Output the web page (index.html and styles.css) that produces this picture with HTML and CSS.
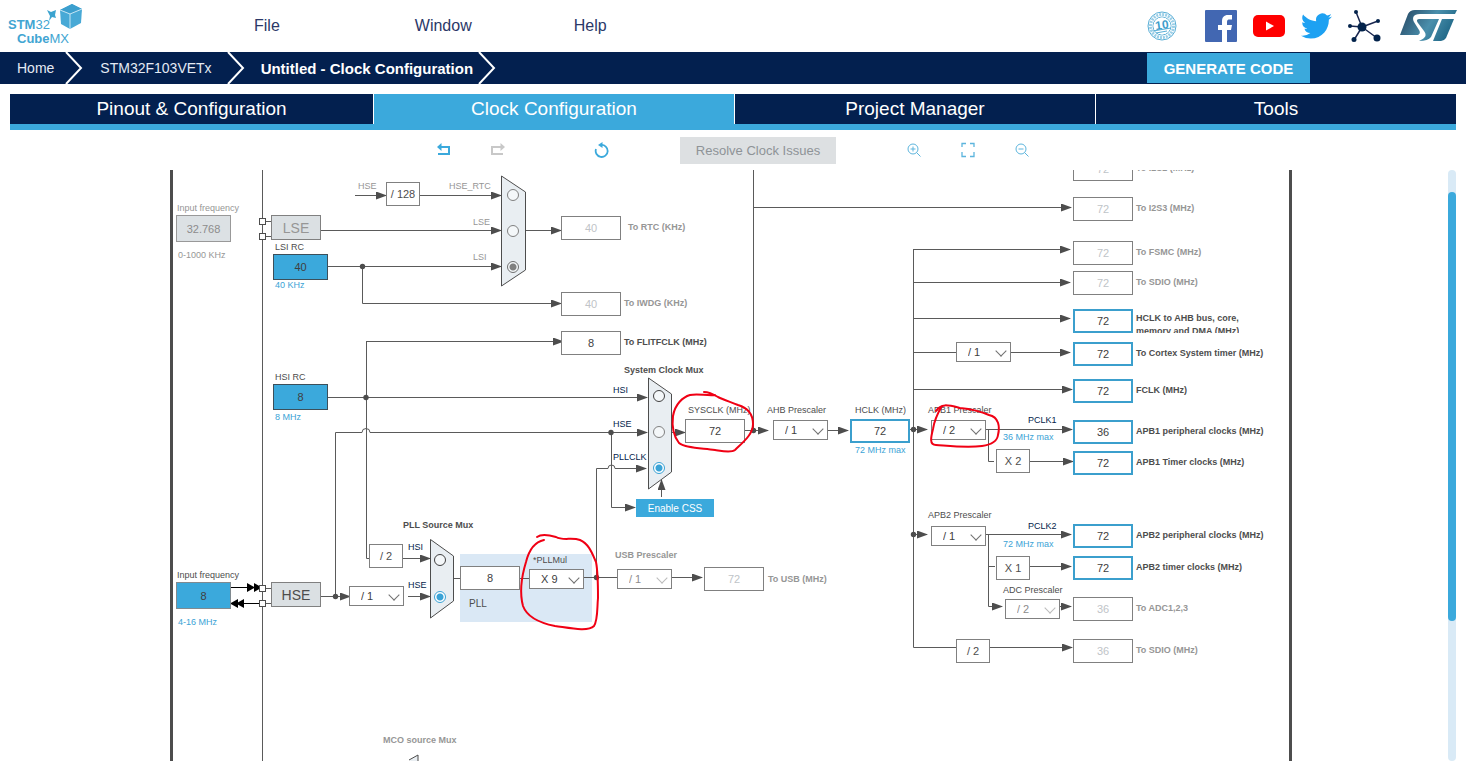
FILE: index.html
```html
<!DOCTYPE html>
<html lang="en">
<head>
<meta charset="utf-8">
<title>STM32CubeMX - Clock Configuration</title>
<link rel="stylesheet" href="styles.css">
</head>
<body>
<header class="topbar">
  <div class="logo">
    <span class="logo-a"><b>STM</b>32</span>
    <span class="logo-b"><b>Cube</b>MX</span>
    <svg class="logo-cube" viewBox="0 0 36 28" aria-hidden="true">
      <path d="M0 6l4 2 5-2-1 5 1 3-4-1-3 4 1-5z" fill="#3ba3cf"/>
      <path d="M13 6L25 0l10 5-1 14-11 6-9-5z" fill="#48a9d6"/>
      <path d="M13 6L25 0l10 5-12 5z" fill="#3c9fce"/>
      <path d="M13 6l10 4 12-5M23 10v15" fill="none" stroke="#c7e6f4"/>
    </svg>
  </div>
  <nav class="menu">
    <button type="button" class="menu-item">File</button>
    <button type="button" class="menu-item">Window</button>
    <button type="button" class="menu-item">Help</button>
  </nav>
  <div class="social">
    <a href="#" class="badge" aria-label="Ten years">
      <svg width="30" height="30" viewBox="0 0 30 30"><g fill="none" stroke="#58aed6"><circle cx="15" cy="15" r="14"/><circle cx="15" cy="15" r="11.5" stroke-width="3" stroke-dasharray="2 1" opacity=".6"/><circle cx="15" cy="15" r="9"/></g><circle cx="15" cy="15" r="8.5" fill="#fff"/><path d="M6 20l18-3M9 22l11-2" stroke="#58aed6"/><text class="badge-num" x="15" y="18" text-anchor="middle" transform="rotate(-8 15 15)">10</text></svg>
    </a>
    <a href="#" aria-label="Facebook">
      <svg width="32" height="32" viewBox="0 0 32 32"><rect width="32" height="32" rx="1" fill="#4267b2"/><path d="M22 32V20h4l1-5h-5v-3c0-2 1-2.500 2.500-2.500H27V5h-4c-4 0-6 2.500-6 6v4h-4v5h4v12z" fill="#fff"/></svg>
    </a>
    <a href="#" aria-label="YouTube">
      <svg width="32" height="32" viewBox="0 0 32 32"><rect y="5" width="32" height="22" rx="5" fill="#f00"/><path d="M13 11.500v9l8-4.500z" fill="#fff"/></svg>
    </a>
    <a href="#" aria-label="Twitter">
      <svg width="31" height="32" viewBox="0 0 24 24"><path fill="#1da1f2" d="M23.950 4.570a10 10 0 01-2.820.770 4.960 4.960 0 002.160-2.720c-.950.550-2 .950-3.130 1.180a4.920 4.920 0 00-8.380 4.480C7.690 8.090 4.070 6.130 1.640 3.160a4.920 4.920 0 001.520 6.570 4.900 4.900 0 01-2.230-.610v.060a4.920 4.920 0 003.950 4.830 5 5 0 01-2.210.080 4.940 4.940 0 004.600 3.420A9.870 9.870 0 010 19.540a14 14 0 007.550 2.210c9.050 0 14-7.500 14-13.980l-.020-.640a9.940 9.940 0 002.420-2.560z"/></svg>
    </a>
    <a href="#" aria-label="Community">
      <svg width="33" height="32" viewBox="0 0 33 32"><path d="M14 17L8 2M14 17l16-6M14 17L2 16M14 17L6 30M14 17l15 11" stroke="#1a2750" stroke-width="1.500"/><g fill="#03234b"><circle cx="14" cy="17" r="4.500"/><circle cx="8" cy="2" r="2"/><circle cx="30" cy="11" r="2"/><circle cx="2" cy="16" r="2"/><circle cx="6" cy="29.500" r="2.500"/><circle cx="29" cy="28" r="3.500"/></g></svg>
    </a>
    <a href="#" class="st" aria-label="ST">
      <svg width="58" height="32" viewBox="0 0 58 32">
        <defs><linearGradient id="st" gradientUnits="userSpaceOnUse" x1="0" y1="0" x2="50" y2="32"><stop offset="0" stop-color="#24435f"/><stop offset=".55" stop-color="#4a8fac"/><stop offset="1" stop-color="#176080"/></linearGradient></defs>
        <path fill="url(#st)" d="M0 25L8 4Q10 0 15 0H57L55 4H20C13 4 12 8 14 12L19 20C21 23 19 25 17 25Z"/>
        <path fill="url(#st)" d="M18 13C16 10 17 9 20 9H39L31 27Q28 31 19 31C26 28 27 25 24 21Z"/>
        <path fill="url(#st)" d="M42 9H54L46 28Q44 31 41 31H33Z"/>
      </svg>
    </a>
  </div>
</header>

<nav class="crumbs" aria-label="Breadcrumb">
  <a href="#" class="crumb crumb-home">Home</a>
  <svg class="sep" viewBox="0 0 18 32" aria-hidden="true"><path d="M1 0l15 16L1 32"/></svg>
  <a href="#" class="crumb crumb-chip">STM32F103VETx</a>
  <svg class="sep" viewBox="0 0 18 32" aria-hidden="true"><path d="M1 0l15 16L1 32"/></svg>
  <a href="#" class="crumb crumb-current">Untitled - Clock Configuration</a>
  <svg class="sep" viewBox="0 0 18 32" aria-hidden="true"><path d="M1 0l15 16L1 32"/></svg>
  <button type="button" class="generate">GENERATE CODE</button>
</nav>

<main class="page">
  <div class="tabs">
    <button type="button" class="tab">Pinout &amp; Configuration</button>
    <button type="button" class="tab tab-active">Clock Configuration</button>
    <button type="button" class="tab">Project Manager</button>
    <button type="button" class="tab">Tools</button>
  </div>

  <div class="toolbar">
    <button type="button" class="tool" aria-label="Undo"><svg viewBox="0 0 16 16"><path d="M3 5h10v7H2" fill="none" stroke="#3ba9dc" stroke-width="2"/><path d="M1 5l4.500-4v8z" fill="#3ba9dc"/></svg></button>
    <button type="button" class="tool tool-redo" disabled aria-label="Redo"><svg viewBox="0 0 16 16"><path d="M12 5H2v7h11" fill="none" stroke="#c8c8c8" stroke-width="2"/><path d="M15 5l-4.500-4v8z" fill="#c8c8c8"/></svg></button>
    <button type="button" class="tool tool-reset" aria-label="Reset"><svg viewBox="0 0 16 16"><path d="M7 3a6 6 0 1 1-5 4" fill="none" stroke="#3ba9dc" stroke-width="1.800"/><path d="M4 3l4.500-3v6z" fill="#3ba9dc"/></svg></button>
    <button type="button" class="resolve" disabled>Resolve Clock Issues</button>
    <button type="button" class="tool tool-in" aria-label="Zoom in"><svg viewBox="0 0 16 16" fill="none" stroke="#5cb5dd"><circle cx="7" cy="7" r="5"/><path d="M10.500 10.500l4 4M4.500 7h5M7 4.500v5"/></svg></button>
    <button type="button" class="tool" aria-label="Fit"><svg viewBox="0 0 16 16" fill="none" stroke="#5cb5dd" stroke-width="1.300"><path d="M2 5V1.500H6M10 1.500h4V5M14 10v4.500H10M6 14.500H2V10"/></svg></button>
    <button type="button" class="tool tool-out" aria-label="Zoom out"><svg viewBox="0 0 16 16" fill="none" stroke="#5cb5dd"><circle cx="7" cy="7" r="5"/><path d="M10.500 10.500l4 4M4.500 7h5"/></svg></button>
  </div>

  <div class="viewport">
    <div class="stage">
      <svg class="wires" viewBox="170 170 1122 591" aria-hidden="true">
        <defs>
          <marker id="arr" markerUnits="userSpaceOnUse" markerWidth="11" markerHeight="8" refX="10" refY="4" orient="auto"><path d="M0 0L11 4L0 8z" fill="#4d4d4d"/></marker>
        </defs>
        <path d="M262.500 170V761" class="w"/>
        <rect x="460" y="554" width="132" height="68" fill="#dae8f5"/>
        <g class="w a">
          <path d="M355 195.500H386"/><path d="M420 195.500H501"/><path d="M321 230.500H501"/><path d="M328 266.500H501"/>
          <path d="M362.500 266V303.500H561"/><path d="M525 230.500H561"/>
          <path d="M366.500 341.500H563"/><path d="M328 397.500H647"/>
          <path d="M335.500 596V432.500H362a4 4 0 0 1 8 0H647"/>
          <path d="M611.500 432V507.500H635"/>
          <path d="M596.500 577V468.500H608a3.500 3.500 0 0 1 7 0H646"/>
          <path d="M661.500 497V480"/><path d="M672 432.500H685"/><path d="M745 430.500H768"/>
          <path d="M753.500 207.500H1071"/><path d="M828 430.500H848"/><path d="M910 429.500H927"/>
          <path d="M913.500 249.500H1070"/><path d="M913.500 282.500H1070"/><path d="M913.500 318.500H1070"/><path d="M1011 352.500H1070"/><path d="M913.500 389.500H1072"/>
          <path d="M986 429.500H1072"/><path d="M1030 461.500H1073"/>
          <path d="M913.500 534.500H927"/><path d="M986 534.500H1071"/><path d="M1030 566.500H1071"/><path d="M988.500 534V606.500H1002"/><path d="M1060 606.500H1071"/>
          <path d="M990 647.500H1072"/>
          <path d="M403 558.500H430"/><path d="M321 596.500H350"/><path d="M408 596.500H430"/><path d="M672 577.500H702"/>
        </g>
        <g class="w">
          <path d="M366.500 341V558.500H369M753.500 170V430M913.500 249V647.500H956M913.500 352.500H956M988.500 429V461.500H994M988.500 566.500H995M453 578.500H460M520 578.500H529M584 577.500H617M266 221.500H271M266 236.500H271M266 588.500H271M266 603.500H271"/>
        </g>
        <g fill="#4d4d4d"><circle cx="362.500" cy="266.500" r="2.700"/><circle cx="366" cy="397.500" r="2.700"/><circle cx="611" cy="432.500" r="2.700"/><circle cx="753.500" cy="430.500" r="2.700"/><circle cx="913.500" cy="429.500" r="2.700"/><circle cx="913.500" cy="534.500" r="2.700"/><circle cx="335.500" cy="596.500" r="2.700"/><circle cx="596.500" cy="577.500" r="2.700"/></g>
        <g stroke="#000" fill="#000"><path d="M231 587.500H260M231 603.500H260"/><path stroke="none" d="M247 583l8 4.500-8 4.500zM254 583l8 4.500-8 4.500zM238 599l-8 4.500 8 4.500zM244 599l-8 4.500 8 4.500z"/></g>
        <g fill="#fff" stroke="#4d4d4d"><rect x="259.500" y="218.500" width="6" height="6"/><rect x="259.500" y="233.500" width="6" height="6"/><rect x="259.500" y="585.500" width="6" height="6"/><rect x="259.500" y="600.500" width="6" height="6"/></g>
        <g fill="#e9eef2" stroke="#4d4d4d"><path d="M501.500 176L525.500 192V270L501.500 286z"/><path d="M648.500 378L671.500 394V472L648.500 489z"/><path d="M430.500 539.500L453.500 556V601L430.500 618z"/><path d="M409 760L418 755V764"/></g>
      </svg>

      <!-- External inputs -->
      <label class="tag dim p-lsein" for="lsein">Input frequency</label>
      <input class="src off p-lsein-box" id="lsein" value="32.768" disabled>
      <span class="tag dim p-lsein-range">0-1000 KHz</span>
      <button type="button" class="osc off p-lse">LSE</button>
      <label class="tag p-lsi" for="lsi">LSI RC</label>
      <input class="src rc p-lsi-box" id="lsi" value="40" readonly>
      <span class="tag blue p-lsi-range">40 KHz</span>
      <label class="tag p-hsi" for="hsi">HSI RC</label>
      <input class="src rc p-hsi-box" id="hsi" value="8" readonly>
      <span class="tag blue p-hsi-range">8 MHz</span>
      <label class="tag p-hsein" for="hsein">Input frequency</label>
      <input class="src p-hsein-box" id="hsein" value="8">
      <span class="tag blue p-hsein-range">4-16 MHz</span>
      <button type="button" class="osc p-hse">HSE</button>

      <!-- RTC mux -->
      <span class="tag dim p-hse-128">HSE</span>
      <div class="fixed p-div128">/ 128</div>
      <label class="tag dim p-hsertc" for="r1">HSE_RTC</label><input type="radio" class="radio dimr p-r1" name="rtc" id="r1" disabled>
      <label class="tag dim p-rlse" for="r2">LSE</label><input type="radio" class="radio dimr p-r2" name="rtc" id="r2" disabled>
      <label class="tag dim p-rlsi" for="r3">LSI</label><input type="radio" class="radio dimr p-r3" name="rtc" id="r3" disabled checked>
      <div class="out off far p-rtc"><input id="rtc" value="40" disabled><label for="rtc">To RTC (KHz)</label></div>
      <div class="out off p-iwdg"><input id="iwdg" value="40" disabled><label for="iwdg">To IWDG (KHz)</label></div>
      <div class="out p-flitf"><input id="flitf" value="8"><label for="flitf">To FLITFCLK (MHz)</label></div>

      <!-- PLL -->
      <span class="tag strong p-pllmux">PLL Source Mux</span>
      <div class="fixed p-plldiv2">/ 2</div>
      <label class="tag navy p-phsi" for="p1">HSI</label><input type="radio" class="radio p-p1" name="pll" id="p1">
      <label class="tag navy p-phse" for="p2">HSE</label><input type="radio" class="radio p-p2" name="pll" id="p2" checked>
      <span class="pick p-hsediv"><select aria-label="HSE divider"><option>/ 1</option></select></span>
      <div class="out p-pllin"><input id="pllin" value="8"></div>
      <label class="tag big p-pll" for="pllin">PLL</label>
      <label class="tag p-pllmul" for="pllmul">*PLLMul</label>
      <span class="pick p-pllmul-box"><select id="pllmul"><option>X 9</option></select></span>
      <label class="tag strong dim p-usbpre" for="usbpre">USB Prescaler</label>
      <span class="pick off p-usbpre-box"><select id="usbpre" disabled><option>/ 1</option></select></span>
      <div class="out off near p-usb"><input id="usb" value="72" disabled><label for="usb">To USB (MHz)</label></div>

      <!-- System clock -->
      <span class="tag strong p-sysmux">System Clock Mux</span>
      <label class="tag navy p-shsi" for="s1">HSI</label><input type="radio" class="radio p-s1" name="sys" id="s1">
      <label class="tag navy p-shse" for="s2">HSE</label><input type="radio" class="radio dimr p-s2" name="sys" id="s2">
      <label class="tag navy p-spll" for="s3">PLLCLK</label><input type="radio" class="radio p-s3" name="sys" id="s3" checked>
      <button type="button" class="css-btn p-css">Enable CSS</button>
      <label class="tag p-sysclk" for="sysclk">SYSCLK (MHz)</label>
      <div class="out p-sysclk-box"><input id="sysclk" value="72"></div>
      <label class="tag p-ahb" for="ahb">AHB Prescaler</label>
      <span class="pick p-ahb-box"><select id="ahb"><option>/ 1</option></select></span>
      <label class="tag p-hclk" for="hclk">HCLK (MHz)</label>
      <div class="out hot p-hclk-box"><input id="hclk" value="72"></div>
      <span class="tag blue p-hclk-max">72 MHz max</span>

      <!-- Peripheral buses -->
      <span class="pick p-cortexdiv"><select aria-label="Cortex prescaler"><option>/ 1</option></select></span>
      <label class="tag p-apb1" for="apb1">APB1 Prescaler</label>
      <span class="pick p-apb1-box"><select id="apb1"><option>/ 2</option></select></span>
      <span class="tag navy p-pclk1">PCLK1</span><span class="tag blue p-pclk1-max">36 MHz max</span>
      <div class="fixed p-x2">X 2</div>
      <label class="tag p-apb2" for="apb2">APB2 Prescaler</label>
      <span class="pick p-apb2-box"><select id="apb2"><option>/ 1</option></select></span>
      <span class="tag navy p-pclk2">PCLK2</span><span class="tag blue p-pclk2-max">72 MHz max</span>
      <div class="fixed p-x1">X 1</div>
      <label class="tag p-adc" for="adc">ADC Prescaler</label>
      <span class="pick off p-adc-box"><select id="adc" disabled><option>/ 2</option></select></span>
      <div class="fixed p-sdiodiv">/ 2</div>

      <div class="out off end e-i2s2"><input id="i2s2" value="72" disabled><label for="i2s2">To I2S2 (MHz)</label></div>
      <div class="out off end e-i2s3"><input id="i2s3" value="72" disabled><label for="i2s3">To I2S3 (MHz)</label></div>
      <div class="out off end e-fsmc"><input id="fsmc" value="72" disabled><label for="fsmc">To FSMC (MHz)</label></div>
      <div class="out off end e-sdio"><input id="sdio" value="72" disabled><label for="sdio">To SDIO (MHz)</label></div>
      <div class="out hot end tall e-core"><input id="core" value="72"><label for="core">HCLK to AHB bus, core,<br>memory and DMA (MHz)</label></div>
      <div class="out hot end e-cortex"><input id="cortex" value="72"><label for="cortex">To Cortex System timer (MHz)</label></div>
      <div class="out hot end e-fclk"><input id="fclk" value="72"><label for="fclk">FCLK (MHz)</label></div>
      <div class="out hot end e-apb1p"><input id="apb1p" value="36"><label for="apb1p">APB1 peripheral clocks (MHz)</label></div>
      <div class="out hot end e-apb1t"><input id="apb1t" value="72"><label for="apb1t">APB1 Timer clocks (MHz)</label></div>
      <div class="out hot end e-apb2p"><input id="apb2p" value="72"><label for="apb2p">APB2 peripheral clocks (MHz)</label></div>
      <div class="out hot end e-apb2t"><input id="apb2t" value="72"><label for="apb2t">APB2 timer clocks (MHz)</label></div>
      <div class="out off end e-adc"><input id="adcout" value="36" disabled><label for="adcout">To ADC1,2,3</label></div>
      <div class="out off end e-sdio2"><input id="sdio2" value="36" disabled><label for="sdio2">To SDIO (MHz)</label></div>

      <span class="tag strong dim p-mco">MCO source Mux</span>

      <svg class="wires ink" viewBox="170 170 1122 591" aria-hidden="true">
        <path d="M704 392C708 392 713 394 718 397C724 400 731 402 738 405C748 408 753 415 753 424C753 435 742 443 735 450C731 453 722 451 715 450C700 448 685 448 679 443C672 434 672 424 673 416C675 404 683 397 690 395C698 393 706 396 715 395"/>
        <path d="M936 411C941 403 948 405 960 408C970 409 980 411 989 415C999 417 1000 427 998 435C997 443 989 445 982 446C967 448 950 446 936 445C929 445 931 437 933 429C934 422 936 416 942 406"/>
        <path d="M537 537C541 534 549 535 556 537C563 541 572 537 580 540C589 544 592 553 596 562C598 572 598 585 598 598C597 608 598 620 594 626C588 632 570 628 555 626C540 623 527 617 523 606C519 591 522 575 526 562C529 550 534 542 544 540"/>
      </svg>
    </div>
    <div class="track"><div class="thumb"></div></div>
  </div>
</main>
</body>
</html>
```

FILE: styles.css
```css
* { box-sizing: border-box; }
body {
  margin: 0;
  min-height: 100vh;
  display: flex;
  flex-direction: column;
  background: #fff;
  font-family: "Liberation Sans", Arial, sans-serif;
  color: #4d4d4d;
}
button, input, select { font-family: inherit; margin: 0; }
button { border: 0; padding: 0; background: none; cursor: pointer; }
a { text-decoration: none; color: inherit; }
svg { display: block; }

/* Top bar */
.topbar { display: flex; align-items: center; height: 52px; padding: 0 8px; }
.logo { position: relative; width: 76px; height: 44px; color: #41a5d2; font-size: 13px; line-height: 14px; padding-top: 14px; }
.logo span { display: block; }
.logo-b { padding-left: 9px; }
.logo-cube { position: absolute; right: 1px; top: 0; width: 36px; height: 28px; }
.menu { display: flex; padding-left: 170px; }
.menu-item { font-size: 16px; line-height: 24px; color: #2b3868; }
.menu-item + .menu-item { margin-left: 135px; }
.menu-item:last-child { margin-left: 102px; }
.social { display: flex; align-items: center; gap: 16px; margin-left: auto; }
.badge { margin-right: 12px; }
.badge-num { font-size: 12px; font-weight: bold; fill: #3d9dcb; }
.st { margin-left: 3px; }

/* Breadcrumb */
.crumbs { display: flex; align-items: center; height: 32px; background: #03204f; color: #fff; font-size: 14px; padding-left: 17px; }
.crumb { color: #e4eaf4; }
.crumb-home { margin-right: 11px; }
.crumb-chip { margin: 0 15px 0 17px; }
.crumb-current { margin: 0 5px 0 16px; font-size: 15px; font-weight: bold; color: #fff; }
.sep { width: 18px; height: 32px; fill: none; stroke: #fff; stroke-width: 2; }
.generate { margin-left: auto; margin-right: 156px; width: 163px; height: 30px; background: #3ba9dc; color: #fff; font-size: 15px; font-weight: bold; }

/* Tabs */
.page { flex: 1; display: flex; flex-direction: column; padding: 10px; }
.tabs { display: grid; grid-template-columns: 363fr 360fr 360fr 360fr; gap: 1px; border-bottom: 6px solid #3ba9dc; }
.tab { height: 30px; background: #03204f; color: #fff; font-size: 19px; }
.tab-active { background: #3ba9dc; }

/* Toolbar */
.toolbar { display: flex; align-items: center; justify-content: center; height: 40px; }
.tool { width: 16px; height: 16px; }
.tool svg { width: 16px; height: 16px; }
.tool-redo, .tool-out { margin-left: 38px; }
.tool-reset { margin-left: 88px; }
.resolve { margin-left: 70px; width: 156px; height: 27px; background: #dde0e2; color: #8e9397; font-size: 13px; }
.tool-in { margin: 0 38px 0 70px; }

/* Diagram */
.viewport { flex: 1; display: flex; }
.stage { position: relative; width: 1122px; margin: 0 auto; left: 2px; height: 591px; overflow: hidden; border: solid #4d4d4d; border-width: 0 3px; }
.wires { position: absolute; left: -3px; top: 0; width: 1122px; height: 591px; }
.w { fill: none; stroke: #5a5a5a; }
.a path { marker-end: url(#arr); }
.ink { fill: none; stroke: #f00014; stroke-width: 2; stroke-linecap: round; pointer-events: none; }
.track { width: 8px; background: #d9eaf6; border-radius: 4px; padding-top: 22px; }
.thumb { height: 429px; background: #3ba9dc; border-radius: 4px; }

.stage > .tag, .stage > .src, .stage > .osc, .stage > .fixed, .stage > .radio,
.stage > .out, .stage > .pick, .stage > .css-btn { position: absolute; }

.tag { font-size: 9px; line-height: 12px; white-space: nowrap; color: #4d4d4d; }
.tag.dim { color: #969696; }
.tag.strong { font-weight: bold; }
.tag.blue { color: #3ba3d6; }
.tag.navy { color: #03234b; }
.tag.big { font-size: 10px; }

.src { width: 55px; height: 27px; padding: 0; border: 1px solid #808a90; background: #3ba9dc; color: #404040; font-size: 11px; text-align: center; }
.src.rc { height: 26px; border-color: #3c4f5a; }
.src.off { background: #dce1e4; color: #8c8c8c; border-color: #999; }
.osc { width: 50px; height: 25px; border: 1px solid #808080; background: #dbe0e3; color: #4d4d4d; font-size: 14px; }
.osc.off { color: #969696; }
.fixed { width: 34px; height: 24px; border: 1px solid #808080; background: #fff; font-size: 11px; line-height: 22px; text-align: center; }
.css-btn { width: 78px; height: 18px; background: #3ba9dc; color: #fff; font-size: 10px; }

.out { display: flex; align-items: center; gap: 3px; height: 24px; font-size: 9px; line-height: 12px; font-weight: bold; white-space: nowrap; }
.out label { padding-bottom: 3px; }
.out.far { gap: 7px; }
.out.near { gap: 4px; }
.out input { width: 60px; height: 24px; padding: 0; border: 1px solid #808080; background: #fff; color: #404040; font-size: 11px; text-align: center; }
.out.hot input { border: 2px solid #3b9fcd; }
.out.off { color: #969696; }
.out.off input { color: #c0c4c8; }
.out.tall { align-items: flex-start; overflow: hidden; padding: 0; }
.out.tall label { line-height: 13px; padding-top: 3px; }

.pick { width: 55px; height: 20px; }
.pick select { appearance: none; width: 55px; height: 20px; padding: 0 0 0 11px; border: 1px solid #808080; border-radius: 0; background: #fff; color: #404040; font-size: 11px; opacity: 1; }
.pick::after { content: ""; position: absolute; right: 6px; top: 5px; width: 7px; height: 7px; border: solid #707070; border-width: 0 1px 1px 0; transform: rotate(45deg); pointer-events: none; }
.pick.off select { color: #8c8c8c; }
.pick.off::after { border-color: #bbb; }

.radio { appearance: none; width: 12px; height: 12px; border: 1px solid #404040; border-radius: 50%; background: #f4f7f9; }
.radio.dimr { border-color: #808080; }
.radio:checked { border-color: #3ba3d6; background: radial-gradient(circle, #3ba3d6 3px, #fff 4px); }
.radio.dimr:checked { border-color: #707070; background: radial-gradient(circle, #808080 3px, #f4f7f9 4px); }

/* Node places on the canvas */
.p-lsein { left: 4px; top: 32px; }
.p-lsein-box { left: 3px; top: 45px; }
.p-lsein-range { left: 5px; top: 79px; }
.p-lse { left: 98px; top: 45px; }
.p-lsi { left: 102px; top: 71px; }
.p-lsi-box { left: 100px; top: 84px; }
.p-lsi-range { left: 102px; top: 109px; }
.p-hsi { left: 102px; top: 201px; }
.p-hsi-box { left: 100px; top: 214px; }
.p-hsi-range { left: 102px; top: 241px; }
.p-hsein { left: 4px; top: 399px; }
.p-hsein-box { left: 3px; top: 412px; }
.p-hsein-range { left: 5px; top: 446px; }
.p-hse { left: 98px; top: 412px; }

.p-hse-128 { left: 185px; top: 10px; }
.p-div128 { left: 213px; top: 12px; }
.p-hsertc { left: 276px; top: 10px; }
.p-rlse { left: 300px; top: 46px; }
.p-rlsi { left: 300px; top: 81px; }
.p-r1 { left: 334px; top: 19px; }
.p-r2 { left: 334px; top: 55px; }
.p-r3 { left: 334px; top: 91px; }
.p-rtc { left: 388px; top: 46px; }
.p-iwdg { left: 388px; top: 122px; }
.p-flitf { left: 388px; top: 161px; }

.p-pllmux { left: 230px; top: 349px; }
.p-plldiv2 { left: 196px; top: 374px; }
.p-phsi { left: 235px; top: 371px; }
.p-phse { left: 235px; top: 409px; }
.p-p1 { left: 261px; top: 384px; }
.p-p2 { left: 261px; top: 421px; }
.p-hsediv { left: 176px; top: 416px; }
.p-pllin { left: 287px; top: 396px; }
.p-pll { left: 296px; top: 428px; }
.p-pllmul { left: 360px; top: 384px; }
.p-pllmul-box { left: 356px; top: 399px; }
.p-usbpre { left: 442px; top: 379px; }
.p-usbpre-box { left: 444px; top: 399px; }
.p-usb { left: 531px; top: 397px; }
.p-usb label { padding-bottom: 0; }

.p-sysmux { left: 451px; top: 194px; }
.p-shsi { left: 440px; top: 214px; }
.p-shse { left: 440px; top: 248px; }
.p-spll { left: 440px; top: 281px; }
.p-s1 { left: 480px; top: 220px; }
.p-s2 { left: 480px; top: 256px; }
.p-s3 { left: 480px; top: 292px; }
.p-css { left: 463px; top: 329px; }
.p-sysclk { left: 515px; top: 234px; }
.p-sysclk-box { left: 512px; top: 249px; }
.p-ahb { left: 594px; top: 234px; }
.p-ahb-box { left: 600px; top: 250px; }
.p-hclk { left: 682px; top: 234px; }
.p-hclk-box { left: 677px; top: 249px; }
.p-hclk-max { left: 682px; top: 274px; }

.p-cortexdiv { left: 783px; top: 172px; }
.p-apb1 { left: 755px; top: 234px; }
.p-apb1-box { left: 758px; top: 250px; }
.p-pclk1 { left: 855px; top: 244px; }
.p-pclk1-max { left: 830px; top: 261px; }
.p-x2 { left: 823px; top: 279px; }
.p-apb2 { left: 755px; top: 339px; }
.p-apb2-box { left: 758px; top: 356px; }
.p-pclk2 { left: 855px; top: 350px; }
.p-pclk2-max { left: 830px; top: 368px; }
.p-x1 { left: 823px; top: 386px; }
.p-adc { left: 830px; top: 414px; }
.p-adc-box { left: 832px; top: 429px; }
.p-sdiodiv { left: 783px; top: 469px; }

.end { left: 900px; }
.e-i2s2 { top: -13px; }
.e-i2s3 { top: 27px; }
.e-fsmc { top: 71px; }
.e-sdio { top: 101px; }
.e-core { top: 139px; }
.e-cortex { top: 172px; }
.e-fclk { top: 209px; }
.e-apb1p { top: 250px; }
.e-apb1t { top: 281px; }
.e-apb2p { top: 354px; }
.e-apb2t { top: 386px; }
.e-adc { top: 427px; }
.e-sdio2 { top: 469px; }

.p-mco { left: 210px; top: 564px; }
```
